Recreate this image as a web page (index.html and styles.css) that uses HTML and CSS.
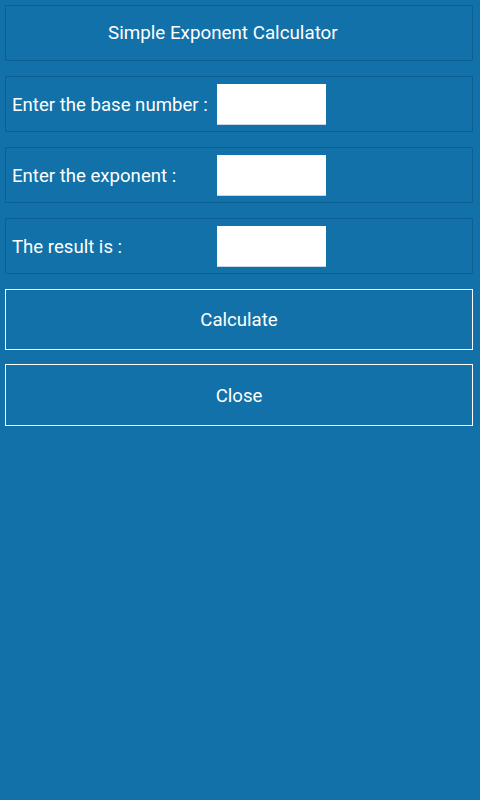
FILE: index.html
```html
<!DOCTYPE html>
<html>
<head>
<meta charset="utf-8">
<link rel="stylesheet" href="styles.css">
</head>
<body>
<div class="app">
  <div class="panel header"><span class="title">Simple Exponent Calculator</span></div>
  <div class="panel row"><span class="label">Enter the base number :</span><div class="field"></div></div>
  <div class="panel row"><span class="label">Enter the exponent :</span><div class="field"></div></div>
  <div class="panel row"><span class="label">The result is :</span><div class="field"></div></div>
  <div class="btn">Calculate</div>
  <div class="btn tall">Close</div>
</div>
</body>
</html>
```
FILE: styles.css
```css
html, body {
  margin: 0;
  padding: 0;
  background: #1271a8;
  width: 480px;
  height: 800px;
  overflow: hidden;
}
.app {
  display: flex;
  flex-direction: column;
  gap: 15px;
  padding: 5px 7px 0 5px;
  font-family: Roboto, "Noto Sans", sans-serif;
  color: #ffffff;
  font-size: 18.6px;
}
.panel {
  height: 54px;
  border: 1px solid #0d5f91;
  border-radius: 1px;
  display: flex;
  align-items: center;
}
.header {
  padding-left: 102px;
}
.title {
  font-size: 18.8px;
}
.row {
  padding-left: 6px;
}
.label {
  width: 205px;
  flex: none;
  padding-top: 2px;
}
.field {
  width: 109px;
  height: 41px;
  background: #ffffff;
  border-bottom: 1px solid #c9d8e2;
  box-sizing: border-box;
  margin-top: 1px;
}
.btn {
  height: 59px;
  border: 1px solid #ffffff;
  display: flex;
  align-items: center;
  justify-content: center;
}
.btn + .btn {
  margin-top: -1px;
}
.btn.tall {
  height: 58px;
  padding-top: 2px;
}
```
